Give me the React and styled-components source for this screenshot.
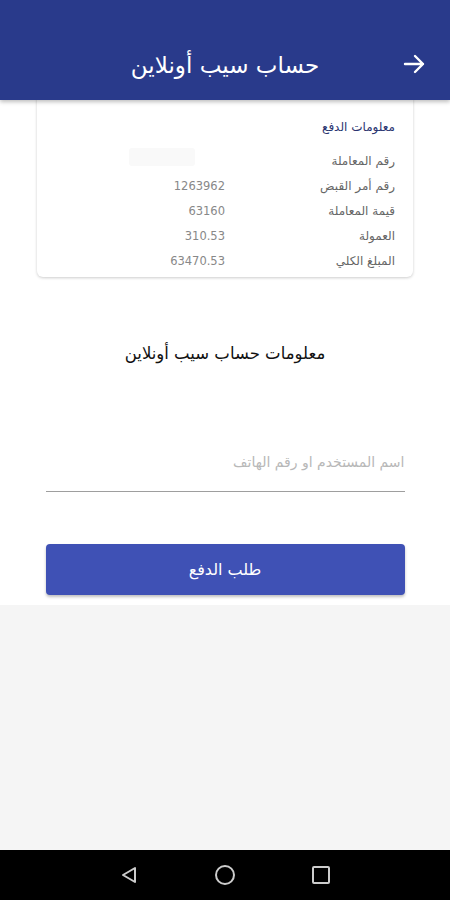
import React from 'react'
import styled, { createGlobalStyle } from 'styled-components'

const GlobalStyle = createGlobalStyle`
  html, body {
    margin: 0;
    padding: 0;
    background: #f5f5f5;
    font-family: "DejaVu Sans", "Noto Sans", sans-serif;
  }
`

const Screen = styled.div`
  width: 450px;
  height: 900px;
  display: flex;
  flex-direction: column;
  background: #f5f5f5;
  overflow: hidden;
`

const Header = styled.div`
  height: 100px;
  flex-shrink: 0;
  background: #293a8b;
  box-shadow: 0 2px 4px rgba(0, 0, 0, 0.25);
  display: grid;
  grid-template-columns: 48px 1fr 48px;
  align-items: end;
  padding: 0 0 20px 0;
  box-sizing: border-box;
  direction: rtl;
  position: relative;
  z-index: 2;
`

const HeaderTitle = styled.h1`
  margin: 0;
  text-align: center;
  color: #fff;
  font-size: 23px;
  font-weight: normal;
  line-height: 30px;
`

const BackIcon = styled.svg`
  width: 24px;
  height: 24px;
  margin: 0 24px 4px 0;
`

const Body = styled.div`
  background: #fff;
  display: flex;
  flex-direction: column;
  align-items: center;
  padding-bottom: 10px;
  direction: rtl;
`

const Card = styled.div`
  width: 376px;
  margin-top: -4px;
  background: #fff;
  border-radius: 0 0 6px 6px;
  box-shadow: 0 1px 3px rgba(0, 0, 0, 0.2);
  padding: 24px 18px 4px 18px;
  box-sizing: border-box;
`

const CardTitle = styled.div`
  color: #2a3470;
  font-size: 12px;
  height: 22px;
  margin-bottom: 6px;
`

const Row = styled.div`
  display: flex;
  height: 25px;
  align-items: center;
  font-size: 12px;
`

const Label = styled.div`
  width: 170px;
  color: #666;
`

const Value = styled.div`
  color: #888;
  font-size: 11.5px;
`

const Blurred = styled.div`
  width: 66px;
  height: 18px;
  margin: -8px 30px 0 0;
  background: #f9f9f9;
  border-radius: 3px;
`

const SectionTitle = styled.h2`
  margin: 67px 0 0 0;
  font-size: 16.5px;
  font-weight: normal;
  color: #111;
  text-align: center;
`

const Field = styled.div`
  width: 359px;
  margin-top: 91px;
  border-bottom: 1.5px solid #9e9e9e;
  padding: 0 0 21px 0;
`

const Placeholder = styled.div`
  color: #b8b8b8;
  font-size: 14px;
`

const PayButton = styled.button`
  width: 359px;
  height: 51px;
  margin-top: 52px;
  border: none;
  border-radius: 4px;
  background: #3f51b5;
  color: #fff;
  font-family: inherit;
  font-size: 16px;
  box-shadow: 0 2px 3px rgba(0, 0, 0, 0.25);
`

const Filler = styled.div`
  flex: 1;
  background: #f5f5f5;
`

const NavBar = styled.div`
  height: 50px;
  flex-shrink: 0;
  background: #000;
  display: flex;
  justify-content: center;
  align-items: center;
  gap: 72px;
`

const NavIcon = styled.svg`
  width: 24px;
  height: 24px;
`

const rows = [
  { label: 'رقم المعاملة', value: null },
  { label: 'رقم أمر القبض', value: '1263962' },
  { label: 'قيمة المعاملة', value: '63160' },
  { label: 'العمولة', value: '310.53' },
  { label: 'المبلغ الكلي', value: '63470.53' },
]

export default function App() {
  return (
    <Screen>
      <GlobalStyle />
      <Header>
        <BackIcon viewBox="0 0 24 24" fill="none" stroke="#fff" strokeWidth="2.4" strokeLinecap="round" strokeLinejoin="round">
          <path d="M3 12h18M13 4l8 8-8 8" />
        </BackIcon>
        <HeaderTitle>حساب سيب أونلاين</HeaderTitle>
        <span />
      </Header>
      <Body>
        <Card>
          <CardTitle>معلومات الدفع</CardTitle>
          {rows.map((r) => (
            <Row key={r.label}>
              <Label>{r.label}</Label>
              {r.value ? <Value>{r.value}</Value> : <Blurred />}
            </Row>
          ))}
        </Card>
        <SectionTitle>معلومات حساب سيب أونلاين</SectionTitle>
        <Field>
          <Placeholder>اسم المستخدم او رقم الهاتف</Placeholder>
        </Field>
        <PayButton>طلب الدفع</PayButton>
      </Body>
      <Filler />
      <NavBar>
        <NavIcon viewBox="0 0 24 24" fill="none" stroke="#ccc" strokeWidth="2" strokeLinejoin="round">
          <path d="M18 5v14L6 12z" />
        </NavIcon>
        <NavIcon viewBox="0 0 24 24" fill="none" stroke="#ccc" strokeWidth="2">
          <circle cx="12" cy="12" r="9" />
        </NavIcon>
        <NavIcon viewBox="0 0 24 24" fill="none" stroke="#ccc" strokeWidth="2">
          <rect x="4" y="4" width="16" height="16" rx="1" />
        </NavIcon>
      </NavBar>
    </Screen>
  )
}
